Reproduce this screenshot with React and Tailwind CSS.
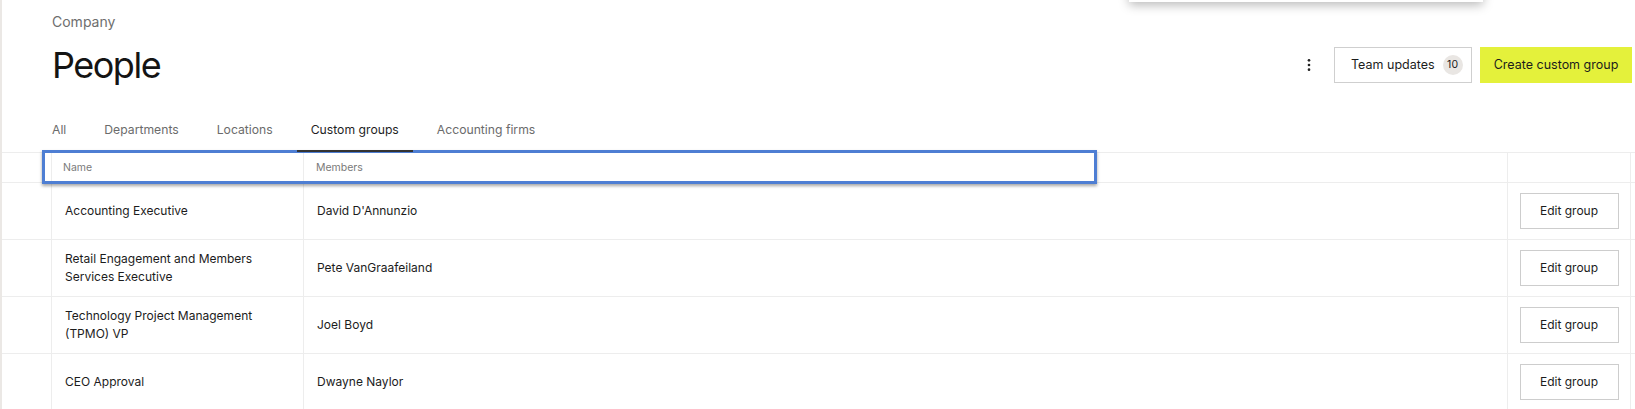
import React from 'react';

const TABS = ['All', 'Departments', 'Locations', 'Custom groups', 'Accounting firms'];

const GROUPS = [
  { name: 'Accounting Executive', member: "David D'Annunzio" },
  { name: 'Retail Engagement and Members Services Executive', member: 'Pete VanGraafeiland' },
  { name: 'Technology Project Management (TPMO) VP', member: 'Joel Boyd' },
  { name: 'CEO Approval', member: 'Dwayne Naylor' },
];

const GRID = 'grid grid-cols-[50px_252px_1204px_123px_1fr]';

function KebabIcon() {
  return (
    <svg width="16" height="16" viewBox="0 0 24 24" fill="#222">
      <circle cx="12" cy="5" r="2" />
      <circle cx="12" cy="12" r="2" />
      <circle cx="12" cy="19" r="2" />
    </svg>
  );
}

export default function App() {
  return (
    <div className="relative w-[1635px] h-[409px] overflow-hidden bg-white border-l-2 border-[#ebe8e5] text-[#1c1c1c] font-['Inter',sans-serif]">
      {/* popup edge peeking in from above */}
      <div className="absolute left-[1127px] top-[-40px] w-[354px] h-[42px] bg-white shadow-[0_3px_10px_rgba(0,0,0,0.28)]" />

      {/* page header */}
      <div className="pl-[50px] pr-[3px] pt-[12px]">
        <div className="text-[14px] leading-[20px] text-[#6e6e6e]">Company</div>
        <div className="flex items-center justify-between mt-[11px] h-[44px]">
          <h1 className="text-[36px] leading-[44px] tracking-[-1.5px] text-[#141414]">People</h1>
          <div className="flex items-center">
            <button className="mr-[17px] flex items-center justify-center w-[16px] h-[36px]">
              <KebabIcon />
            </button>
            <button className="flex items-center h-[36px] w-[138px] pl-[16px] border border-[#cfcfcf] bg-white text-[12.5px]">
              <span>Team updates</span>
              <span className="ml-[8px] w-[20px] h-[20px] rounded-full bg-[#e9e6e3] flex items-center justify-center text-[10.5px]">10</span>
            </button>
            <button className="ml-[8px] h-[36px] w-[152px] bg-[#e4f13b] text-[12.5px] flex items-center justify-center">
              Create custom group
            </button>
          </div>
        </div>

        {/* tabs */}
        <div className="relative z-10 flex gap-[10px] ml-[-14px] mt-[23px]">
          {TABS.map((t) => (
            <div
              key={t}
              className={`px-[14px] pt-[10px] pb-[10px] text-[12.2px] leading-[20px] border-b-2 ${
                t === 'Custom groups' ? 'border-[#333] text-[#1f1f1f]' : 'border-transparent text-[#6b6b6b]'
              }`}
            >
              {t}
            </div>
          ))}
        </div>
      </div>

      {/* table */}
      <div className="text-[12px]">
        <div className={`${GRID} h-[31px] border-y border-[#ededed] text-[10.5px] text-[#7a7a7a]`}>
          <div className="border-r border-[#ededed]" />
          <div className="border-r border-[#ededed] pl-[11px] flex items-center">Name</div>
          <div className="border-r border-[#ededed] pl-[12px] flex items-center">Members</div>
          <div className="border-r border-[#ededed]" />
          <div />
        </div>
        {GROUPS.map((g) => (
          <div key={g.name} className={`${GRID} h-[57px] border-b border-[#ededed]`}>
            <div className="border-r border-[#ededed]" />
            <div className="border-r border-[#ededed] pl-[13px] pr-[13px] flex items-center leading-[18px]">{g.name}</div>
            <div className="border-r border-[#ededed] pl-[13px] flex items-center">{g.member}</div>
            <div className="border-r border-[#ededed] flex items-center justify-center">
              <button className="w-[99px] h-[36px] border border-[#cdcdcd] bg-white">Edit group</button>
            </div>
            <div />
          </div>
        ))}
      </div>

      {/* highlight annotation around the header row */}
      <div className="absolute left-[40px] top-[150px] w-[1055px] h-[34px] border-[3px] border-[#4e7ed3] shadow-[0_2px_3px_rgba(0,0,0,0.35)]" />
    </div>
  );
}
